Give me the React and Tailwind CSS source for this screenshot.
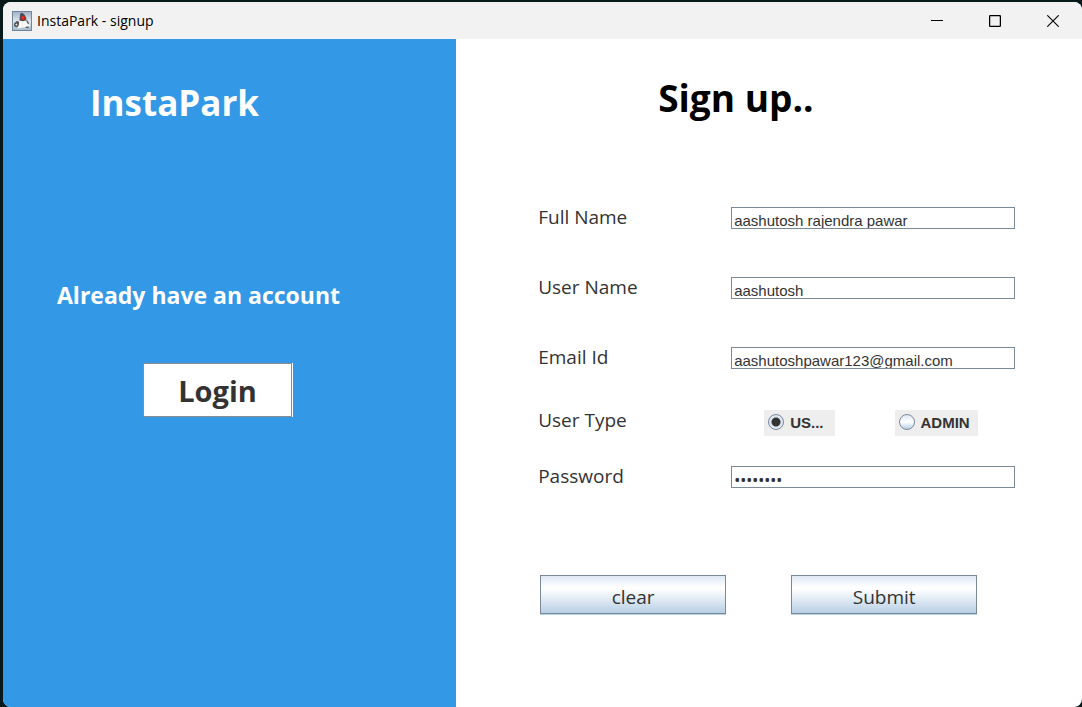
import React from "react";

const uiFont = "font-['Open_Sans','Noto_Sans',sans-serif]";
const fieldFont = "font-['Liberation_Sans',Arial,sans-serif]";

function JavaIcon() {
  return (
    <svg width="20" height="20" viewBox="0 0 20 20" aria-hidden="true">
      <defs>
        <linearGradient id="duke-bg" x1="0" y1="0" x2="0" y2="1">
          <stop offset="0" stopColor="#9db1c5" />
          <stop offset="0.5" stopColor="#dde6ee" />
          <stop offset="1" stopColor="#a3b8cb" />
        </linearGradient>
      </defs>
      <rect x="0.5" y="0.5" width="19" height="19" fill="url(#duke-bg)" stroke="#71869b" />
      <path d="M5 17.2 6 12.5 8 9.5l6-.5 3.6 3.6.4 2.8-3.2.2-1.3 1.6-2.8-.9-2.7 1z" fill="#f6f6f3" />
      <path d="M8.2 2.6l2-.8 2.4 2 1.8 3.4-.6 2.2-3 .8-3.4-.8.4-3.4z" fill="#4b4c50" />
      <path d="M2 12.4l3-2.6 2.2 1.2-.5 3.4-1.6 2-3-1.2z" fill="#56575b" />
      <path d="M3.2 13.6l1.6-1 .6 1.2-1 1z" fill="#e6e6e4" />
      <path d="M13.8 8.2l2 1.8 1.8 3.4-2.4-1.2z" fill="#5d5e62" />
      <path d="M12.4 16.8l2.4-1.2 2.4.2-1 1.4z" fill="#66676b" />
      <circle cx="11" cy="7" r="2.3" fill="#c92222" />
      <circle cx="10.8" cy="6.5" r="1" fill="#ef4138" />
    </svg>
  );
}

function TitleBar() {
  return (
    <header className="flex h-[37px] items-center justify-between bg-[#f2f2f2] pl-[9px]">
      <div className="flex items-center gap-[5px]">
        <JavaIcon />
        <span className="text-sm text-black">InstaPark - signup</span>
      </div>
      <div className="flex h-full text-black">
        <button type="button" aria-label="Minimize" className="flex w-[58px] items-center justify-center">
          <svg width="12" height="12" viewBox="0 0 12 12" stroke="currentColor">
            <path d="M0 5.5h12" />
          </svg>
        </button>
        <button type="button" aria-label="Maximize" className="flex w-[58px] items-center justify-center">
          <svg width="12" height="12" viewBox="0 0 12 12" fill="none" stroke="currentColor">
            <rect x="0.6" y="0.6" width="10.8" height="10.8" rx="1" strokeWidth="1.3" />
          </svg>
        </button>
        <button type="button" aria-label="Close" className="flex w-[58px] items-center justify-center">
          <svg width="12" height="12" viewBox="0 0 12 12" stroke="currentColor" strokeWidth="1.1">
            <path d="M0.3 0.3l11.4 11.4M11.7 0.3L0.3 11.7" />
          </svg>
        </button>
      </div>
    </header>
  );
}

function Field({ id, label, type = "text", value }) {
  const text = type === "password" ? "text-base font-['Noto_Sans',sans-serif]" : `text-[15px] ${fieldFont}`;
  return (
    <div className="grid grid-cols-[193px_1fr] items-start">
      <label htmlFor={id} className="text-[19px] leading-5 text-[#333]">{label}</label>
      <input
        id={id}
        type={type}
        defaultValue={value}
        className={`h-[22px] w-full min-w-0 border border-[#7a8a99] bg-white px-[2px] pt-[5px] leading-4 text-[#333] outline-none ${text}`}
      />
    </div>
  );
}

function RadioOption({ label, checked }) {
  return (
    <label className={`flex h-[26px] items-center gap-[6px] bg-[#eee] pr-2 pl-1 text-[15px] font-bold text-[#333] first:pr-[11px] ${fieldFont}`}>
      <input
        type="radio"
        name="userType"
        defaultChecked={checked}
        className="mb-[3px] size-4 appearance-none rounded-full border border-[#7a8a99] bg-linear-to-b from-[#dde8f3] via-white to-[#b8cfe5] checked:bg-[radial-gradient(circle,#333_4px,#dde8f3_5px)]"
      />
      <span>{label}</span>
    </label>
  );
}

function MetalButton({ children, type }) {
  return (
    <button
      type={type}
      className="h-[39px] w-[186px] border border-[#7a8a99] bg-[linear-gradient(to_bottom,#dde8f3_0%,#fff_30%,#fff_35%,#b8cfe5_100%)] pt-1 text-[19px] leading-6 text-[#333] shadow-[0_1px_0_#b8cfe5]"
    >
      {children}
    </button>
  );
}

export default function App() {
  return (
    <div className={`flex min-h-screen flex-col bg-[#07191b] pt-[2px] pl-[3px] ${uiFont}`}>
      <div className="flex grow flex-col overflow-hidden rounded-lg bg-white">
        <TitleBar />
        <main className="flex grow">
          <section className="w-[42%] bg-[#3399e6] text-white">
            <h1 className="pt-10 pl-[87px] text-[35px] leading-[48px] font-bold">InstaPark</h1>
            <p className="mt-[152px] pl-[54px] text-[23px] leading-8 font-bold">Already have an account</p>
            <button
              type="button"
              className="mt-[52px] ml-[140px] h-[54px] w-[149px] border border-[#8c8c8c] bg-white pt-[2px] text-[29px] font-bold text-[#333] shadow-[1px_0_0_#fff]"
            >
              Login
            </button>
          </section>
          <section className="grow pr-[67px] pl-[82px]">
            <h2 className="pt-[35px] pl-[120px] text-[37px] leading-[48px] font-bold text-black">Sign up..</h2>
            <form className="mt-[85px]" onSubmit={(e) => e.preventDefault()}>
              <div className="flex flex-col gap-12">
                <Field id="fullName" label="Full Name" value="aashutosh rajendra pawar" />
                <Field id="userName" label="User Name" value="aashutosh" />
                <Field id="email" label="Email Id" value="aashutoshpawar123@gmail.com" />
              </div>
              <div className="mt-[41px] mb-[30px] grid grid-cols-[193px_1fr]" role="radiogroup" aria-labelledby="userTypeLabel">
                <span id="userTypeLabel" className="text-[19px] leading-5 text-[#333]">User Type</span>
                <div className="flex gap-[60px] pl-[33px]">
                  <RadioOption label="US..." checked />
                  <RadioOption label="ADMIN" />
                </div>
              </div>
              <Field id="password" label="Password" type="password" value="password" />
              <div className="mt-[87px] flex gap-[65px] pl-[2px]">
                <MetalButton type="reset">clear</MetalButton>
                <MetalButton type="submit">Submit</MetalButton>
              </div>
            </form>
          </section>
        </main>
      </div>
    </div>
  );
}
